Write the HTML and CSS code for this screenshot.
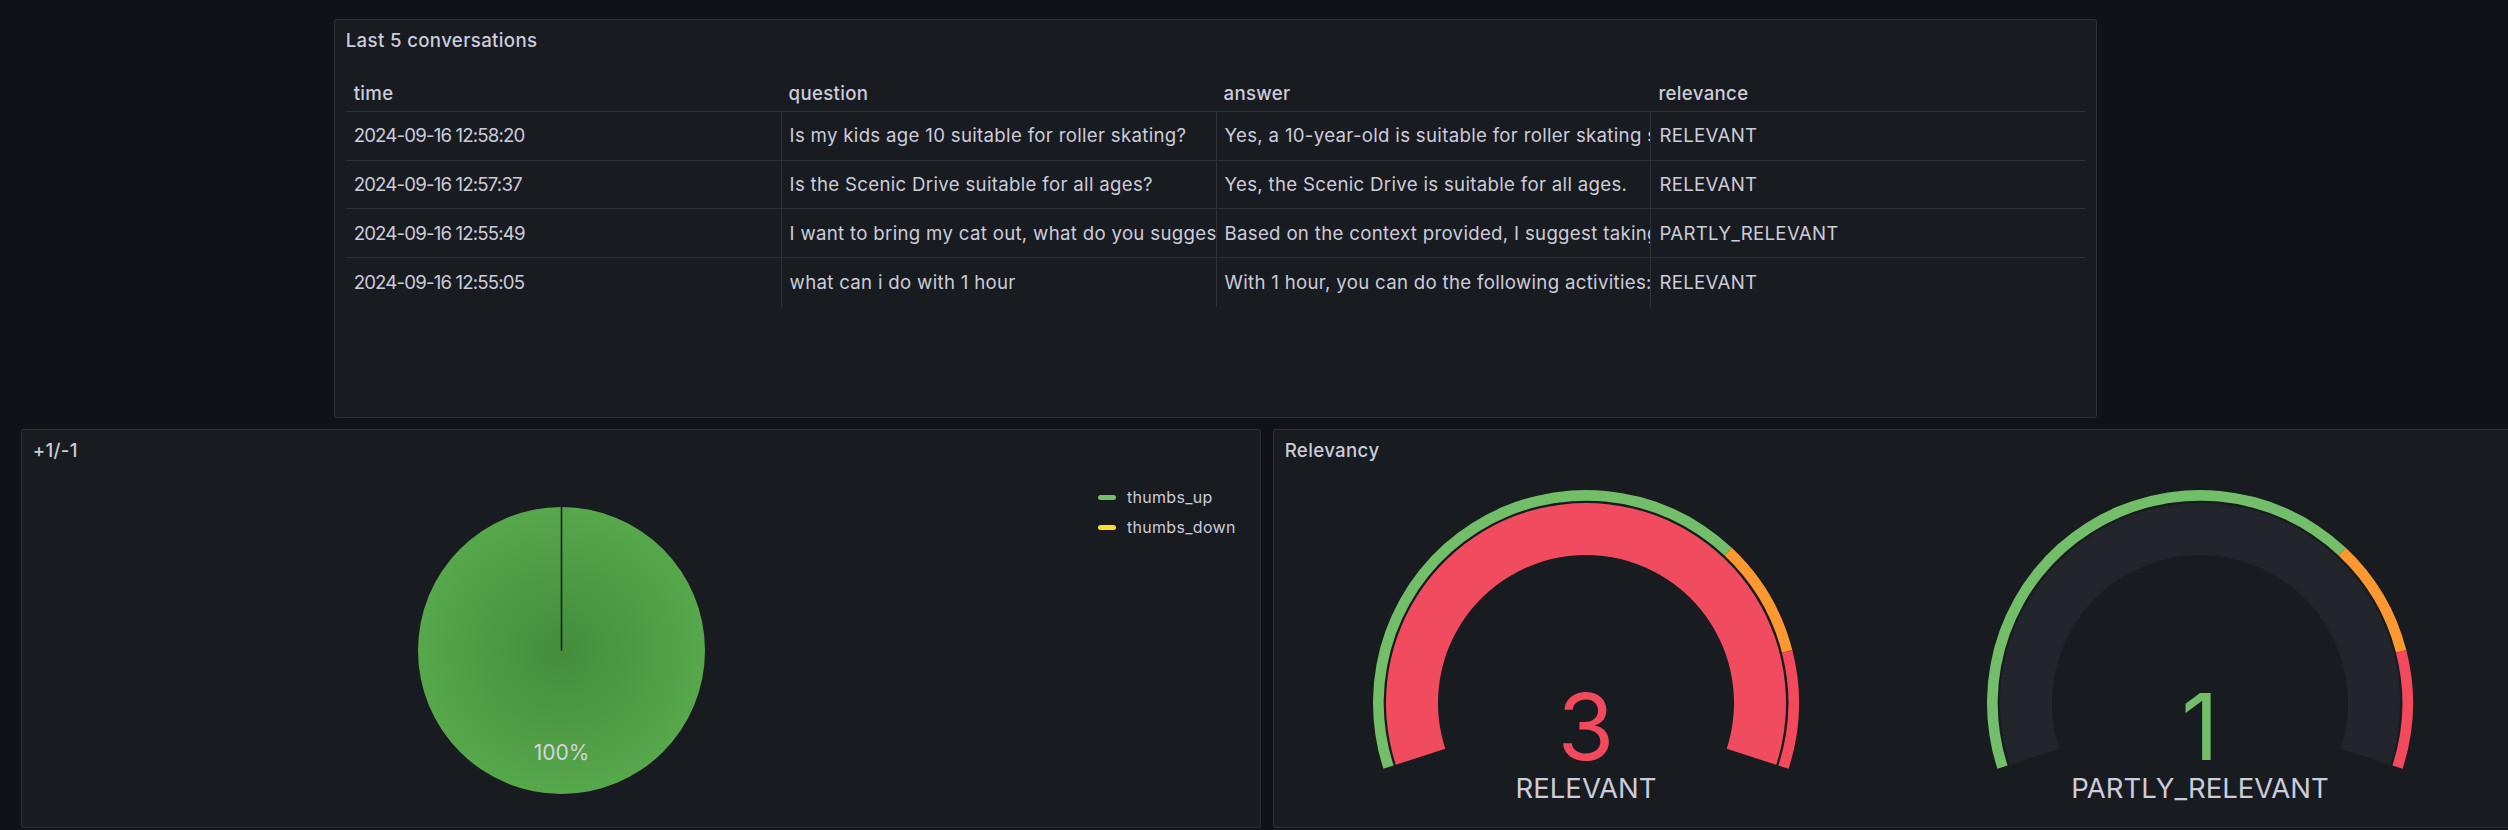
FILE: index.html
```html
<!DOCTYPE html>
<html lang="en">
<head>
<meta charset="utf-8">
<title>Dashboard</title>
<link rel="stylesheet" href="styles.css">
</head>
<body>
<div class="dash">
  <div class="row row-top">
    <section class="panel panel-table">
      <header class="panel-header"><h2 class="panel-title">Last 5 conversations</h2></header>
      <div class="panel-body">
        <div class="table">
          <div class="tr thead">
            <div class="th">time</div>
            <div class="th">question</div>
            <div class="th">answer</div>
            <div class="th">relevance</div>
          </div>
          <div class="tr">
            <div class="td td-time">2024-09-16 12:58:20</div>
            <div class="td">Is my kids age 10 suitable for roller skating?</div>
            <div class="td">Yes, a 10-year-old is suitable for roller skating since the activity is for all ages.</div>
            <div class="td">RELEVANT</div>
          </div>
          <div class="tr">
            <div class="td td-time">2024-09-16 12:57:37</div>
            <div class="td">Is the Scenic Drive suitable for all ages?</div>
            <div class="td">Yes, the Scenic Drive is suitable for all ages.</div>
            <div class="td">RELEVANT</div>
          </div>
          <div class="tr">
            <div class="td td-time">2024-09-16 12:55:49</div>
            <div class="td">I want to bring my cat out, what do you suggest?</div>
            <div class="td">Based on the context provided, I suggest taking your cat to a pet-friendly place.</div>
            <div class="td">PARTLY_RELEVANT</div>
          </div>
          <div class="tr last">
            <div class="td td-time">2024-09-16 12:55:05</div>
            <div class="td">what can i do with 1 hour</div>
            <div class="td">With 1 hour, you can do the following activities: scenic drive, roller skating.</div>
            <div class="td">RELEVANT</div>
          </div>
        </div>
      </div>
    </section>
  </div>
  <div class="row row-bottom">
    <section class="panel panel-pie">
      <header class="panel-header"><h2 class="panel-title">+1/-1</h2></header>
      <div class="panel-body pie-body">
        <div class="pie-area">
          <svg class="pie" width="287" height="287" viewBox="0 0 287 287">
            <defs>
              <radialGradient id="pieGrad" cx="50%" cy="50%" r="50%">
                <stop offset="0%" stop-color="#438d3d"/>
                <stop offset="100%" stop-color="#57a74b"/>
              </radialGradient>
            </defs>
            <circle cx="143.5" cy="143.5" r="143.5" fill="url(#pieGrad)"/>
            <line x1="143.5" y1="0" x2="143.5" y2="143.5" stroke="#181b1f" stroke-width="1.6"/>
            <text class="pie-label" x="143.5" y="252.5" text-anchor="middle">100%</text>
          </svg>
        </div>
        <ul class="legend">
          <li class="legend-item"><span class="swatch swatch-green"></span>thumbs_up</li>
          <li class="legend-item"><span class="swatch swatch-yellow"></span>thumbs_down</li>
        </ul>
      </div>
    </section>
    <section class="panel panel-gauge">
      <header class="panel-header"><h2 class="panel-title">Relevancy</h2></header>
      <div class="panel-body gauge-body">
        <div class="gauge-cell">
          <svg class="gauge" width="602" height="344" viewBox="0 0 602 344">
            <path fill="#73bf69" d="M 98.424 296.821 A 213 213 0 0 1 446.809 75.729 L 439.505 83.511 A 202.33 202.33 0 0 0 108.572 293.524 Z"/>
            <path fill="#ff9830" d="M 446.809 75.729 A 213 213 0 0 1 507.308 178.029 L 496.973 180.683 A 202.33 202.33 0 0 0 439.505 83.511 Z"/>
            <path fill="#f2495c" d="M 507.308 178.029 A 213 213 0 0 1 503.576 296.821 L 493.428 293.524 A 202.33 202.33 0 0 0 496.973 180.683 Z"/>
            <path fill="#f04b5f" d="M 110.788 292.804 A 200 200 0 1 1 491.212 292.804 L 441.757 276.735 A 148 148 0 1 0 160.243 276.735 Z"/>
            <text class="gauge-value value-red" x="301" y="288" text-anchor="middle">3</text>
            <text class="gauge-label" x="301" y="326" text-anchor="middle">RELEVANT</text>
          </svg>
        </div>
        <div class="gauge-cell">
          <svg class="gauge" width="602" height="344" viewBox="0 0 602 344">
            <path fill="#73bf69" d="M 98.424 296.821 A 213 213 0 0 1 446.809 75.729 L 439.505 83.511 A 202.33 202.33 0 0 0 108.572 293.524 Z"/>
            <path fill="#ff9830" d="M 446.809 75.729 A 213 213 0 0 1 507.308 178.029 L 496.973 180.683 A 202.33 202.33 0 0 0 439.505 83.511 Z"/>
            <path fill="#f2495c" d="M 507.308 178.029 A 213 213 0 0 1 503.576 296.821 L 493.428 293.524 A 202.33 202.33 0 0 0 496.973 180.683 Z"/>
            <path fill="#22252b" d="M 110.788 292.804 A 200 200 0 1 1 491.212 292.804 L 441.757 276.735 A 148 148 0 1 0 160.243 276.735 Z"/>
            <text class="gauge-value value-green" x="301" y="288" text-anchor="middle">1</text>
            <text class="gauge-label" x="301" y="326" text-anchor="middle">PARTLY_RELEVANT</text>
          </svg>
        </div>
      </div>
    </section>
  </div>
</div>
</body>
</html>
```

FILE: styles.css
```css
html, body {
  margin: 0;
  padding: 0;
  background: #111217;
  overflow: hidden;
  width: 2508px;
  height: 830px;
}

body {
  font-family: Inter, "Noto Sans", "DejaVu Sans", sans-serif;
  color: #ccccdc;
  font-size: 18.6667px;
}

.dash {
  display: flex;
  flex-direction: column;
  gap: 11px;
  padding-top: 19px;
}

.row-top {
  padding-left: 334px;
}

.row-bottom {
  display: flex;
  gap: 12px;
  padding-left: 21px;
}

.panel {
  box-sizing: border-box;
  height: 399px;
  background: #181b1f;
  border: 1px solid rgba(204, 204, 220, 0.12);
  border-radius: 3px;
  display: flex;
  flex-direction: column;
  flex-shrink: 0;
  overflow: hidden;
}

.panel-table { width: 1763px; }
.panel-pie { width: 1240px; }
.panel-gauge { width: 1239px; }

.panel-header {
  height: 42px;
  display: flex;
  align-items: center;
  padding: 0 10.67px;
  flex-shrink: 0;
}

.panel-title {
  margin: 0;
  font-size: 18.6667px;
  font-weight: 500;
  color: #ccccdc;
  line-height: 1;
  letter-spacing: 0.35px;
  font-variant-numeric: proportional-nums;
}

.panel-body {
  flex: 1;
  padding: 0 10.67px 10.67px;
  min-height: 0;
}

/* table */
.table {
  margin-top: 13px;
  letter-spacing: 0.3px;
  font-variant-numeric: proportional-nums;
}

.tr {
  display: grid;
  grid-template-columns: repeat(4, 1fr);
  height: 48.67px;
  box-sizing: border-box;
  border-bottom: 1px solid rgba(204, 204, 220, 0.12);
}

.tr.last { border-bottom: none; }

.tr.thead {
  height: 37px;
}

.th, .td {
  display: flex;
  align-items: center;
  padding: 0 8px;
  white-space: nowrap;
  overflow: hidden;
  min-width: 0;
}

.th {
  font-weight: 500;
}

.td-time {
  letter-spacing: -0.85px;
}

.td + .td {
  border-left: 1px solid rgba(204, 204, 220, 0.12);
}

/* pie */
.pie-body {
  display: flex;
}

.pie-area {
  width: 1058.67px;
  flex-shrink: 0;
  display: flex;
  justify-content: center;
  align-items: flex-start;
  padding-top: 35px;
  box-sizing: border-box;
}

.pie { display: block; }

.pie-label {
  font-family: Inter, "Noto Sans", sans-serif;
  font-size: 21px;
  fill: #d4d4de;
}

.legend {
  list-style: none;
  margin: 0;
  padding: 10px 0 0 6.7px;
  flex: 1;
}

.legend-item {
  height: 30px;
  display: flex;
  align-items: center;
  white-space: nowrap;
  font-size: 16px;
  letter-spacing: 0.3px;
  color: #ccccdc;
}

.swatch {
  width: 18px;
  height: 5px;
  border-radius: 3px;
  margin-right: 11px;
  flex-shrink: 0;
}

.swatch-green { background: #73bf69; }
.swatch-yellow { background: #fade2a; }

/* gauge */
.gauge-body {
  display: flex;
  gap: 12.67px;
}

.gauge-cell {
  flex: 1;
  display: flex;
  justify-content: center;
  overflow: visible;
}

.gauge { display: block; flex-shrink: 0; }

.gauge-value {
  font-family: Inter, "Noto Sans", sans-serif;
  font-size: 92px;
  font-weight: 400;
}

.value-red { fill: #f2495c; }
.value-green { fill: #73bf69; }

.gauge-label {
  font-family: Inter, "Noto Sans", sans-serif;
  font-size: 27.5px;
  fill: #ccccdc;
}
```
